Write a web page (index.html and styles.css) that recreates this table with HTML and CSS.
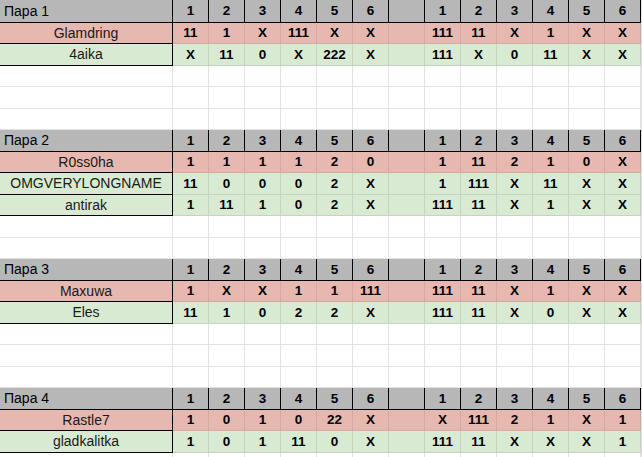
FILE: index.html
```html
<!DOCTYPE html>
<html lang="ru">
<head>
<meta charset="utf-8">
<title>Пары</title>
<link rel="stylesheet" href="styles.css">
</head>
<body>
<div class="sheet">
  <div class="h nm">Пара 1</div><div class="h">1</div><div class="h">2</div><div class="h">3</div><div class="h">4</div><div class="h">5</div><div class="h">6</div><div class="h"></div><div class="h">1</div><div class="h">2</div><div class="h">3</div><div class="h">4</div><div class="h">5</div><div class="h">6</div><div></div>
  <div class="p nm">Glamdring</div><div class="p">11</div><div class="p">1</div><div class="p">X</div><div class="p">111</div><div class="p">X</div><div class="p">X</div><div class="p"></div><div class="p">111</div><div class="p">11</div><div class="p">X</div><div class="p">1</div><div class="p">X</div><div class="p">X</div><div></div>
  <div class="g nm">4aika</div><div class="g">X</div><div class="g">11</div><div class="g">0</div><div class="g">X</div><div class="g">222</div><div class="g">X</div><div class="g"></div><div class="g">111</div><div class="g">X</div><div class="g">0</div><div class="g">11</div><div class="g">X</div><div class="g">X</div><div></div>
  <div></div><div></div><div></div><div></div><div></div><div></div><div></div><div></div><div></div><div></div><div></div><div></div><div></div><div></div><div></div>
  <div></div><div></div><div></div><div></div><div></div><div></div><div></div><div></div><div></div><div></div><div></div><div></div><div></div><div></div><div></div>
  <div></div><div></div><div></div><div></div><div></div><div></div><div></div><div></div><div></div><div></div><div></div><div></div><div></div><div></div><div></div>

  <div class="h nm">Пара 2</div><div class="h">1</div><div class="h">2</div><div class="h">3</div><div class="h">4</div><div class="h">5</div><div class="h">6</div><div class="h"></div><div class="h">1</div><div class="h">2</div><div class="h">3</div><div class="h">4</div><div class="h">5</div><div class="h">6</div><div></div>
  <div class="p nm">R0ss0ha</div><div class="p">1</div><div class="p">1</div><div class="p">1</div><div class="p">1</div><div class="p">2</div><div class="p">0</div><div class="p"></div><div class="p">1</div><div class="p">11</div><div class="p">2</div><div class="p">1</div><div class="p">0</div><div class="p">X</div><div></div>
  <div class="g nm">OMGVERYLONGNAME</div><div class="g">11</div><div class="g">0</div><div class="g">0</div><div class="g">0</div><div class="g">2</div><div class="g">X</div><div class="g"></div><div class="g">1</div><div class="g">111</div><div class="g">X</div><div class="g">11</div><div class="g">X</div><div class="g">X</div><div></div>
  <div class="g nm">antirak</div><div class="g">1</div><div class="g">11</div><div class="g">1</div><div class="g">0</div><div class="g">2</div><div class="g">X</div><div class="g"></div><div class="g">111</div><div class="g">11</div><div class="g">X</div><div class="g">1</div><div class="g">X</div><div class="g">X</div><div></div>
  <div></div><div></div><div></div><div></div><div></div><div></div><div></div><div></div><div></div><div></div><div></div><div></div><div></div><div></div><div></div>
  <div></div><div></div><div></div><div></div><div></div><div></div><div></div><div></div><div></div><div></div><div></div><div></div><div></div><div></div><div></div>

  <div class="h nm">Пара 3</div><div class="h">1</div><div class="h">2</div><div class="h">3</div><div class="h">4</div><div class="h">5</div><div class="h">6</div><div class="h"></div><div class="h">1</div><div class="h">2</div><div class="h">3</div><div class="h">4</div><div class="h">5</div><div class="h">6</div><div></div>
  <div class="p nm">Maxuwa</div><div class="p">1</div><div class="p">X</div><div class="p">X</div><div class="p">1</div><div class="p">1</div><div class="p">111</div><div class="p"></div><div class="p">111</div><div class="p">11</div><div class="p">X</div><div class="p">1</div><div class="p">X</div><div class="p">X</div><div></div>
  <div class="g nm">Eles</div><div class="g">11</div><div class="g">1</div><div class="g">0</div><div class="g">2</div><div class="g">2</div><div class="g">X</div><div class="g"></div><div class="g">111</div><div class="g">11</div><div class="g">X</div><div class="g">0</div><div class="g">X</div><div class="g">X</div><div></div>
  <div></div><div></div><div></div><div></div><div></div><div></div><div></div><div></div><div></div><div></div><div></div><div></div><div></div><div></div><div></div>
  <div></div><div></div><div></div><div></div><div></div><div></div><div></div><div></div><div></div><div></div><div></div><div></div><div></div><div></div><div></div>
  <div></div><div></div><div></div><div></div><div></div><div></div><div></div><div></div><div></div><div></div><div></div><div></div><div></div><div></div><div></div>

  <div class="h nm">Пара 4</div><div class="h">1</div><div class="h">2</div><div class="h">3</div><div class="h">4</div><div class="h">5</div><div class="h">6</div><div class="h"></div><div class="h">1</div><div class="h">2</div><div class="h">3</div><div class="h">4</div><div class="h">5</div><div class="h">6</div><div></div>
  <div class="p nm">Rastle7</div><div class="p">1</div><div class="p">0</div><div class="p">1</div><div class="p">0</div><div class="p">22</div><div class="p">X</div><div class="p"></div><div class="p">X</div><div class="p">111</div><div class="p">2</div><div class="p">1</div><div class="p">X</div><div class="p">1</div><div></div>
  <div class="g nm">gladkalitka</div><div class="g">1</div><div class="g">0</div><div class="g">1</div><div class="g">11</div><div class="g">0</div><div class="g">X</div><div class="g"></div><div class="g">111</div><div class="g">11</div><div class="g">X</div><div class="g">X</div><div class="g">X</div><div class="g">1</div><div></div>
  <div></div><div></div><div></div><div></div><div></div><div></div><div></div><div></div><div></div><div></div><div></div><div></div><div></div><div></div><div></div>
</div>
</body>
</html>
```
FILE: styles.css
```css
html, body {
  margin: 0;
  padding: 0;
  background: #ffffff;
}

body {
  font-family: "Liberation Sans", Arial, sans-serif;
  overflow: hidden;
}

.sheet {
  display: grid;
  grid-template-columns: 173px repeat(13, 36px) 1fr;
  grid-template-rows: 22.5px repeat(21, 21.5px);
  width: 642px;
}

.sheet > div {
  box-sizing: border-box;
  border-right: 1px solid #e2e2e2;
  border-bottom: 1px solid #e2e2e2;
  display: flex;
  align-items: center;
  justify-content: center;
  font-size: 13.5px;
  font-weight: bold;
  color: #000;
  white-space: nowrap;
  overflow: hidden;
}

.sheet > .h {
  background: #b7b7b7;
  border-right-color: #000;
  border-bottom-color: #000;
}

.sheet > .p {
  background: #e6b8af;
  border-right-color: #d5a9a0;
  border-bottom-color: #d5a9a0;
}

.sheet > .g {
  background: #d9ead3;
  border-right-color: #c4d5be;
  border-bottom-color: #c4d5be;
}

.sheet > .nm {
  font-weight: normal;
  font-size: 14px;
  color: #1a1a1a;
  border-right-color: #000;
  border-bottom-color: #000;
}

.sheet > .h.nm {
  justify-content: flex-start;
  padding-left: 4px;
  color: #000;
}
```
